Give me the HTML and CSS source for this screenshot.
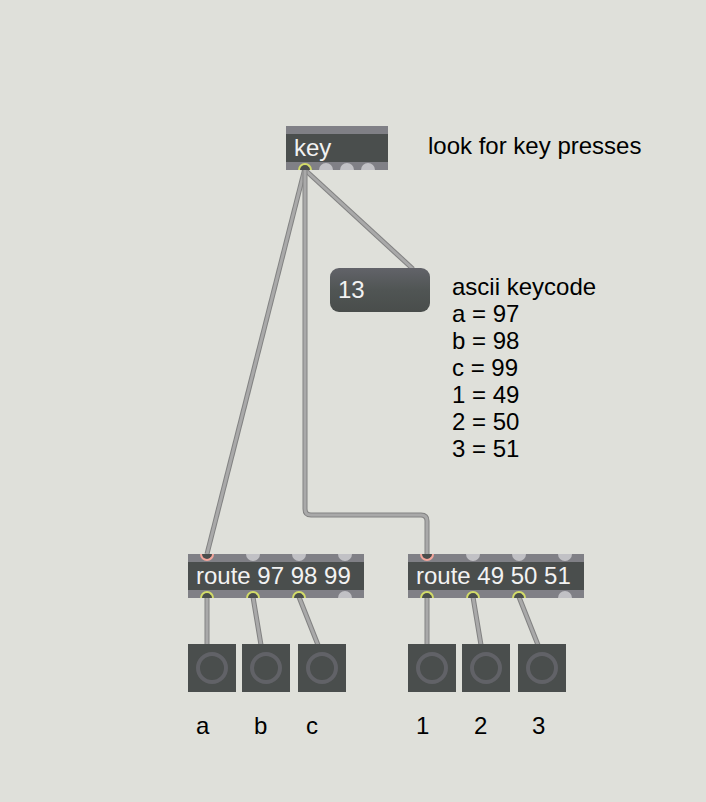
FILE: index.html
```html
<!DOCTYPE html>
<html lang="en">
<head>
<meta charset="utf-8">
<meta name="viewport" content="width=device-width, initial-scale=1">
<title>Key routing patch</title>
<link rel="stylesheet" href="styles.css">
</head>
<body>
<main class="patcher">
  <svg class="cords" aria-hidden="true">
    <defs>
      <path id="cord-letters" d="M305 168 L207 554"/>
      <path id="cord-digits" d="M305 168 V509 Q305 515 311 515 H421 Q427 515 427 521 V554"/>
      <path id="cord-number" d="M303 168 L413 269"/>
      <path id="cord-outs" d="M207 597 V645 M253 597 L261 645 M299 597 L318 645 M427 597 V645 M473 597 L481 645 M519 597 L538 645"/>
    </defs>
    <use class="cord-edge" href="#cord-letters"/><use class="cord-core" href="#cord-letters"/>
    <use class="cord-edge" href="#cord-number"/><use class="cord-core" href="#cord-number"/>
    <use class="cord-edge" href="#cord-digits"/><use class="cord-core" href="#cord-digits"/>
    <use class="cord-edge" href="#cord-outs"/><use class="cord-core" href="#cord-outs"/>
  </svg>

  <div class="node object key-object">
    <div class="ports inlets"></div>
    <div class="object-text">key</div>
    <div class="ports outlets"><i class="port out"></i><i class="port"></i><i class="port"></i><i class="port"></i></div>
  </div>
  <p class="node comment key-comment">look for key presses</p>

  <input class="node number-box" type="text" inputmode="numeric" value="13" aria-label="Key code">
  <p class="node comment code-comment">ascii keycode<br>a = 97<br>b = 98<br>c = 99<br>1 = 49<br>2 = 50<br>3 = 51</p>

  <div class="node object route route-letters">
    <div class="ports inlets"><i class="port in"></i><i class="port"></i><i class="port"></i><i class="port"></i></div>
    <div class="object-text">route 97 98 99</div>
    <div class="ports outlets"><i class="port out"></i><i class="port out"></i><i class="port out"></i><i class="port"></i></div>
  </div>
  <div class="node object route route-digits">
    <div class="ports inlets"><i class="port in"></i><i class="port"></i><i class="port"></i><i class="port"></i></div>
    <div class="object-text">route 49 50 51</div>
    <div class="ports outlets"><i class="port out"></i><i class="port out"></i><i class="port out"></i><i class="port"></i></div>
  </div>

  <button class="node bang bang-a" id="bang-a" type="button"></button>
  <button class="node bang bang-b" id="bang-b" type="button"></button>
  <button class="node bang bang-c" id="bang-c" type="button"></button>
  <button class="node bang bang-1" id="bang-1" type="button"></button>
  <button class="node bang bang-2" id="bang-2" type="button"></button>
  <button class="node bang bang-3" id="bang-3" type="button"></button>

  <label class="node comment label-a" for="bang-a">a</label>
  <label class="node comment label-b" for="bang-b">b</label>
  <label class="node comment label-c" for="bang-c">c</label>
  <label class="node comment label-1" for="bang-1">1</label>
  <label class="node comment label-2" for="bang-2">2</label>
  <label class="node comment label-3" for="bang-3">3</label>
</main>
</body>
</html>
```

FILE: styles.css
```css
*,
*::before {
  box-sizing: border-box;
}

body {
  margin: 0;
  background: #dfe0da;
  color: #000;
  font: 24px/27px "Liberation Sans", Arial, sans-serif;
}

/* Free canvas: every node keeps its own place */
.patcher {
  position: relative;
  min-height: 100vh;
}

.node {
  position: absolute;
  margin: 0;
}

.comment {
  white-space: nowrap;
}

/* Object boxes */
.object {
  background: #4a4e4d;
  color: #f2f2f2;
}

.object-text {
  padding: 0 8px;
  line-height: 28px;
  white-space: nowrap;
}

.ports {
  display: flex;
  gap: 7px;
  height: 8px;
  padding: 0 12px;
  background: #808086;
}

.route .ports {
  gap: 32px;
}

.outlets {
  align-items: flex-end;
}

.port {
  width: 14px;
  height: 7px;
  background: #c1c1c5;
}

.inlets .port {
  border-radius: 0 0 7px 7px;
}

.outlets .port {
  border-radius: 7px 7px 0 0;
}

.port.in {
  background: #4a4e4d;
  border: 2px solid #f4a69c;
  border-top: 0;
}

.port.out {
  background: #4a4e4d;
  border: 2px solid #d3dc69;
  border-bottom: 0;
}

.number-box {
  width: 100px;
  height: 44px;
  padding: 0 8px;
  border: 0;
  border-radius: 9px;
  background: linear-gradient(#626369, #505554 50%, #494d4b);
  color: #f2f2f2;
  font: inherit;
}

.bang {
  display: grid;
  place-items: center;
  width: 48px;
  height: 48px;
  padding: 0;
  border: 0;
  background: #4a4e4d;
}

.bang::before {
  content: "";
  width: 32px;
  height: 32px;
  border: 4px solid #616267;
  border-radius: 50%;
}

/* Patch cords */
.cords {
  position: absolute;
  inset: 0;
  width: 100%;
  height: 100%;
  overflow: visible;
  fill: none;
  pointer-events: none;
}

.cord-edge {
  stroke: #828282;
  stroke-width: 5px;
}

.cord-core {
  stroke: #a9a9a9;
  stroke-width: 3px;
}

/* Node places */
.key-object { left: 286px; top: 126px; width: 102px; }
.key-comment { left: 428px; top: 132px; }
.number-box { left: 330px; top: 268px; }
.code-comment { left: 452px; top: 273px; }

.route { top: 554px; width: 176px; }
.route-letters { left: 188px; }
.route-digits { left: 408px; }

.bang { top: 644px; }
.bang-a { left: 188px; }
.bang-b { left: 242px; }
.bang-c { left: 298px; }
.bang-1 { left: 408px; }
.bang-2 { left: 462px; }
.bang-3 { left: 518px; }

label.comment { top: 712px; }
.label-a { left: 196px; }
.label-b { left: 254px; }
.label-c { left: 306px; }
.label-1 { left: 416px; }
.label-2 { left: 474px; }
.label-3 { left: 532px; }
```
